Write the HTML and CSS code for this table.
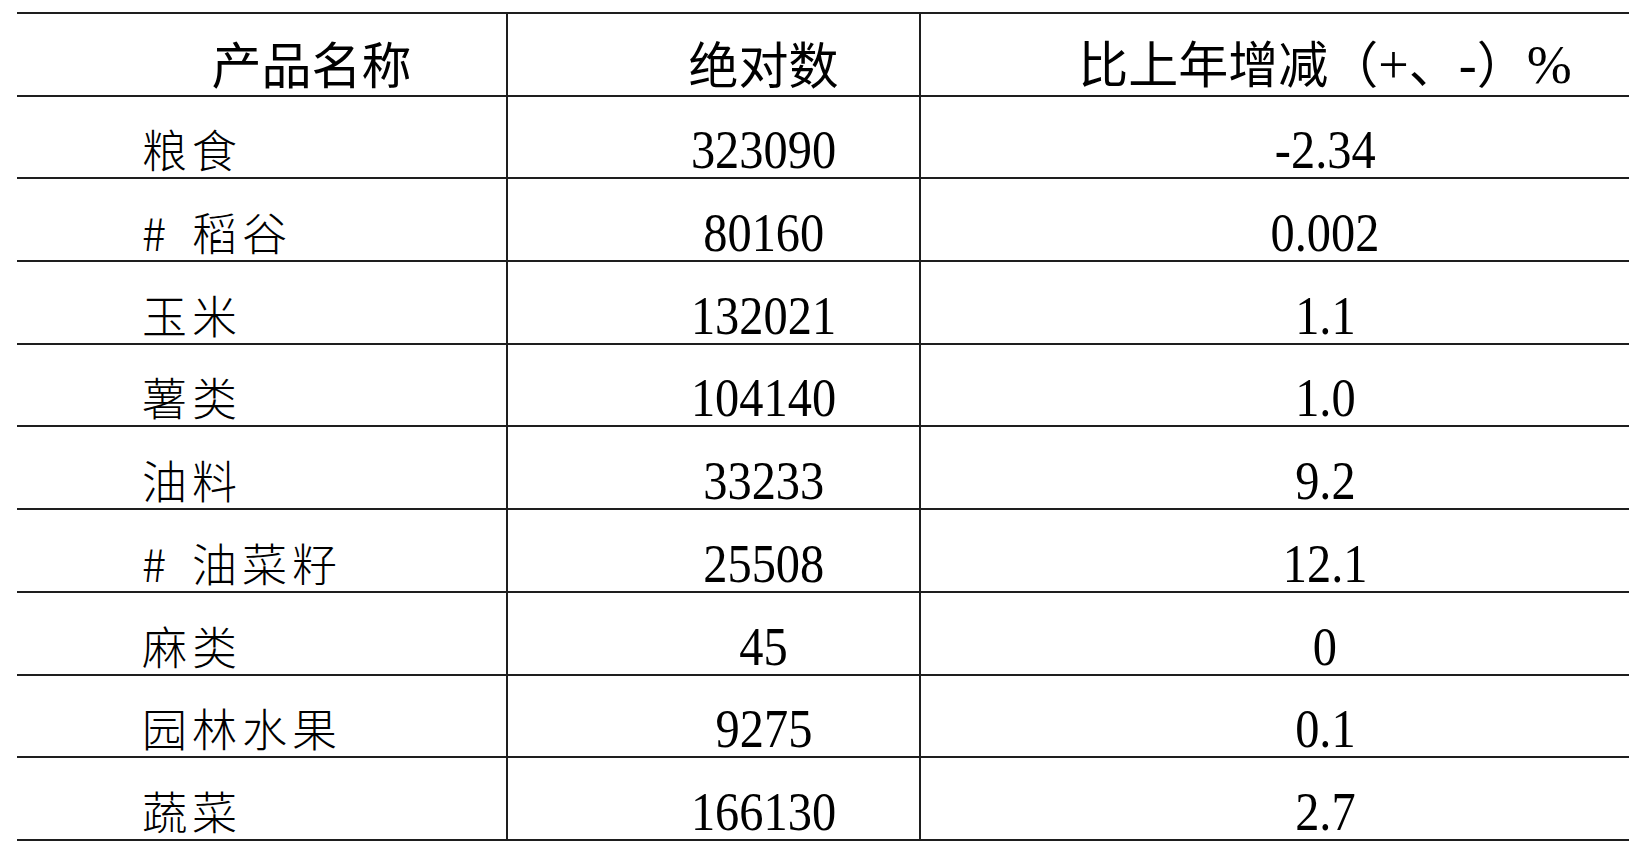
FILE: index.html
```html
<!DOCTYPE html>
<html lang="zh-CN">
<head>
<meta charset="utf-8">
<title>农产品产量</title>
<link rel="stylesheet" href="styles.css">
</head>
<body>
<div class="table">
  <div class="cell head c1"><span class="cjk-head">产品名称</span></div>
  <div class="cell head c2"><span class="cjk-head">绝对数</span></div>
  <div class="cell head c3"><span class="cjk-head">比上年增减（<span class="lat">+</span>、<span class="lat">-</span>）<span class="lat">%</span></span></div>

  <div class="cell name"><span class="cn">粮食</span></div>
  <div class="cell num c2"><span class="n">323090</span></div>
  <div class="cell num c3"><span class="n">-2.34</span></div>

  <div class="cell name"><span class="cn"><span class="mark">#</span>稻谷</span></div>
  <div class="cell num c2"><span class="n">80160</span></div>
  <div class="cell num c3"><span class="n">0.002</span></div>

  <div class="cell name"><span class="cn">玉米</span></div>
  <div class="cell num c2"><span class="n">132021</span></div>
  <div class="cell num c3"><span class="n">1.1</span></div>

  <div class="cell name"><span class="cn">薯类</span></div>
  <div class="cell num c2"><span class="n">104140</span></div>
  <div class="cell num c3"><span class="n">1.0</span></div>

  <div class="cell name"><span class="cn">油料</span></div>
  <div class="cell num c2"><span class="n">33233</span></div>
  <div class="cell num c3"><span class="n">9.2</span></div>

  <div class="cell name"><span class="cn"><span class="mark">#</span>油菜籽</span></div>
  <div class="cell num c2"><span class="n">25508</span></div>
  <div class="cell num c3"><span class="n">12.1</span></div>

  <div class="cell name"><span class="cn">麻类</span></div>
  <div class="cell num c2"><span class="n">45</span></div>
  <div class="cell num c3"><span class="n">0</span></div>

  <div class="cell name"><span class="cn">园林水果</span></div>
  <div class="cell num c2"><span class="n">9275</span></div>
  <div class="cell num c3"><span class="n">0.1</span></div>

  <div class="cell name"><span class="cn">蔬菜</span></div>
  <div class="cell num c2"><span class="n">166130</span></div>
  <div class="cell num c3"><span class="n">2.7</span></div>
</div>
</body>
</html>
```

FILE: styles.css
```css
html, body {
  margin: 0;
  padding: 0;
  background: #ffffff;
  overflow: hidden;
}

.table {
  margin: 12px 0 0 17px;
  width: 1612px;
  display: grid;
  grid-template-columns: 491px 413px 708px;
  grid-auto-rows: 82.7px;
  border-top: 2px solid #1e1e1e;
  color: #000;
}

.cell {
  box-sizing: border-box;
  border-bottom: 2px solid #1e1e1e;
  display: flex;
  align-items: flex-end;
  justify-content: center;
  padding-left: 100px;
  overflow: visible;
}

.cell.head,
.cell.name,
.cell.num.c2 {
  border-right: 2px solid #1e1e1e;
}

.cell.c3 {
  border-right: none;
}

.head {
  padding-bottom: 3px;
}

.cjk-head {
  font-family: "Liberation Serif", "Noto Sans CJK SC", sans-serif;
  font-size: 50px;
  line-height: 1;
  white-space: nowrap;
}

.cjk-head .lat {
  font-family: "Liberation Serif", serif;
  font-size: 54px;
}

.name {
  justify-content: flex-start;
  padding-left: 125px;
  padding-bottom: 6px;
}

.cn {
  font-family: "Noto Sans CJK SC", sans-serif;
  font-weight: 300;
  font-size: 45px;
  letter-spacing: 5px;
  line-height: 1;
  white-space: nowrap;
}

.mark {
  display: inline-block;
  width: 50px;
  letter-spacing: 0;
}

.num {
  padding-bottom: 0;
}

.n {
  display: inline-block;
  font-family: "Liberation Serif", serif;
  font-size: 55px;
  line-height: 1;
  transform: scaleX(0.88);
  white-space: nowrap;
}
```
